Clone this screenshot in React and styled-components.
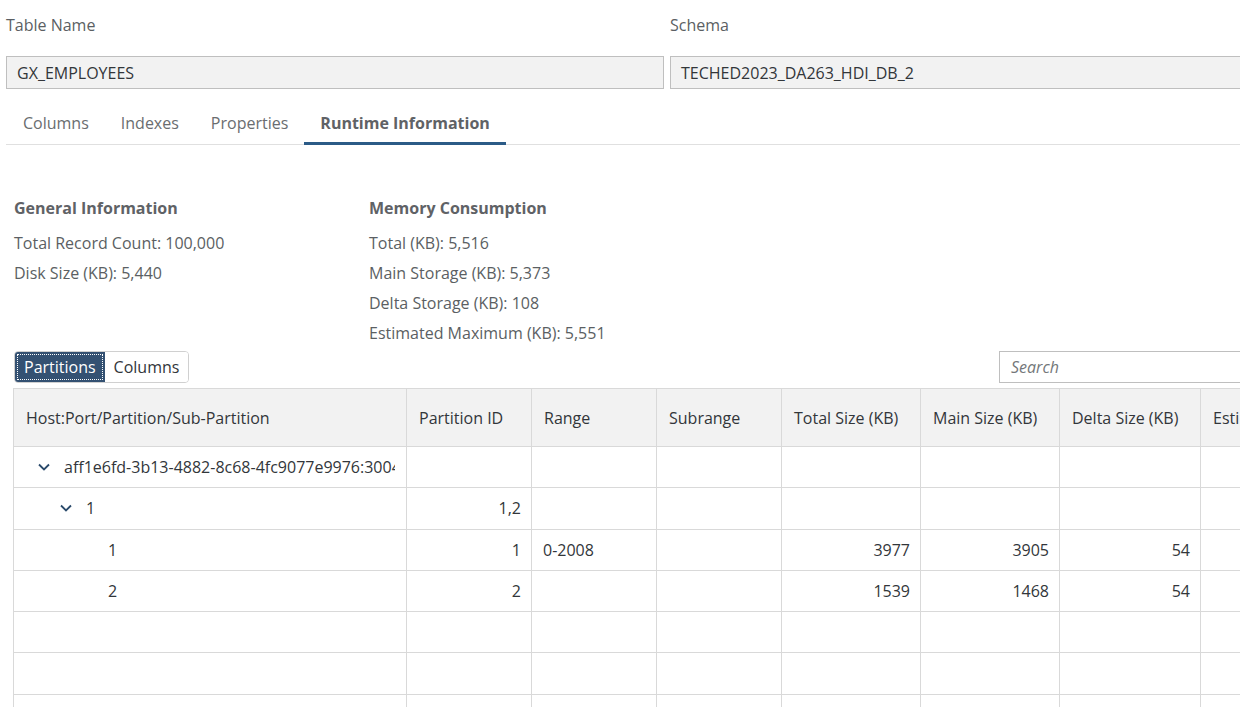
import React from "react";
import styled, { createGlobalStyle } from "styled-components";

const Global = createGlobalStyle`
  html, body { margin: 0; padding: 0; background: #fff; }
  body { width: 1240px; height: 707px; overflow: hidden; font-family: "Open Sans", Roboto, "Liberation Sans", sans-serif; }
  * { box-sizing: border-box; }
`;

const Page = styled.div`
  width: 1340px;
  padding: 0 0 0 6px;
  color: #32363a;
  font-size: 16px;
`;

const FormGrid = styled.div`
  display: grid;
  grid-template-columns: 658px 658px;
  column-gap: 6px;
`;

const Field = styled.div`
  display: flex;
  flex-direction: column;
`;

const Label = styled.div`
  height: 50px;
  margin-bottom: 6px;
  display: flex;
  align-items: center;
  color: #5b5f63;
`;

const ReadInput = styled.div`
  height: 33px;
  background: #f2f2f2;
  border: 1px solid #bfbfbf;
  display: flex;
  align-items: center;
  padding: 0 10px;
  color: #32363a;
`;

const TabBar = styled.div`
  margin-top: 10px;
  padding-left: 2px;
  display: flex;
  border-bottom: 1px solid #e0e0e0;
  width: 1234px;
`;

const Tab = styled.div`
  height: 46px;
  display: flex;
  align-items: center;
  padding: 4px 16px 0;
  margin-right: ${p => (p.$gap ? 0 : 0)}px;
  color: ${p => (p.$active ? "#5f6266" : "#6a6d70")};
  font-weight: ${p => (p.$active ? 700 : 400)};
  border-bottom: 3px solid ${p => (p.$active ? "#2b5b87" : "transparent")};
  margin-bottom: -1px;
  &:first-child { padding-left: 15px; }
`;

const InfoRow = styled.div`
  display: flex;
  padding: 48px 0 0 8px;
`;

const InfoCol = styled.div`
  width: ${p => p.$w}px;
  display: flex;
  flex-direction: column;
`;

const InfoHead = styled.div`
  height: 30px;
  display: flex;
  align-items: center;
  font-weight: 700;
  color: #5f6266;
  margin-bottom: 5px;
`;

const InfoItem = styled.div`
  height: 30px;
  display: flex;
  align-items: center;
  color: #5b5f63;
`;

const Toolbar = styled.div`
  display: flex;
  justify-content: space-between;
  align-items: center;
  padding: 3px 0 0 8px;
  width: 1300px;
`;

const Segmented = styled.div`
  display: flex;
  height: 32px;
  border: 1px solid #d0d0d0;
  border-radius: 4px;
  overflow: hidden;
`;

const SegBtn = styled.div`
  display: flex;
  align-items: center;
  padding: 0 9px;
  background: ${p => (p.$active ? "#345172" : "#fff")};
  color: ${p => (p.$active ? "#fff" : "#32363a")};
  outline: ${p => (p.$active ? "1px dotted #fff" : "none")};
  outline-offset: -3px;
`;

const SearchBox = styled.div`
  width: 306px;
  height: 32px;
  border: 1px solid #bfbfbf;
  display: flex;
  align-items: center;
  padding: 0 11px;
  font-style: italic;
  color: #74777a;
  margin-right: 1px;
`;

const Table = styled.div`
  margin: 5px 0 0 7px;
  display: grid;
  grid-template-columns: 393px 125px 125px 125px 139px 139px 141px 200px;
  border-left: 1px solid #d9d9d9;
  border-top: 1px solid #d9d9d9;
  width: max-content;
`;

const HeadCell = styled.div`
  height: 58px;
  background: #f2f2f2;
  border-right: 1px solid #d9d9d9;
  border-bottom: 1px solid #d9d9d9;
  display: flex;
  align-items: center;
  padding: 0 12px;
  white-space: nowrap;
  overflow: hidden;
  color: #32363a;
`;

const Cell = styled.div`
  height: 41.3px;
  border-right: 1px solid #d9d9d9;
  border-bottom: 1px solid #d9d9d9;
  display: flex;
  align-items: center;
  justify-content: ${p => (p.$right ? "flex-end" : "flex-start")};
  padding: 0 ${p => (p.$right ? 10 : 11)}px 0 ${p => 11 + (p.$indent || 0)}px;
  white-space: nowrap;
  overflow: hidden;
  color: #32363a;
`;

const TreeText = styled.span`
  overflow: hidden;
  white-space: nowrap;
  text-overflow: clip;
`;

const Chevron = styled.svg`
  width: 14px;
  height: 10px;
  flex: none;
  margin-right: 13px;
`;

const ChevronDown = () => (
  <Chevron viewBox="0 0 14 10">
    <path d="M2 2.5 L7 7.5 L12 2.5" fill="none" stroke="#2a4a6b" strokeWidth="1.8" />
  </Chevron>
);

const headers = [
  "Host:Port/Partition/Sub-Partition",
  "Partition ID",
  "Range",
  "Subrange",
  "Total Size (KB)",
  "Main Size (KB)",
  "Delta Size (KB)",
  "Estimated Maximum (KB)",
];

const rows = [
  { level: 0, tree: true, name: "aff1e6fd-3b13-4882-8c68-4fc9077e9976:30040", vals: ["", "", "", "", "", "", ""] },
  { level: 1, tree: true, name: "1", vals: ["1,2", "", "", "", "", "", ""] },
  { level: 2, name: "1", vals: ["1", "0-2008", "", "3977", "3905", "54", ""] },
  { level: 2, name: "2", vals: ["2", "", "", "1539", "1468", "54", ""] },
  { empty: true },
  { empty: true },
  { empty: true },
];

const rightCols = [0, 3, 4, 5, 6];

export default function App() {
  return (
    <>
      <Global />
      <Page>
        <FormGrid>
          <Field>
            <Label>Table Name</Label>
            <ReadInput>GX_EMPLOYEES</ReadInput>
          </Field>
          <Field>
            <Label>Schema</Label>
            <ReadInput>TECHED2023_DA263_HDI_DB_2</ReadInput>
          </Field>
        </FormGrid>
        <TabBar>
          <Tab>Columns</Tab>
          <Tab>Indexes</Tab>
          <Tab>Properties</Tab>
          <Tab $active>Runtime Information</Tab>
        </TabBar>
        <InfoRow>
          <InfoCol $w={355}>
            <InfoHead>General Information</InfoHead>
            <InfoItem>Total Record Count: 100,000</InfoItem>
            <InfoItem>Disk Size (KB): 5,440</InfoItem>
          </InfoCol>
          <InfoCol $w={400}>
            <InfoHead>Memory Consumption</InfoHead>
            <InfoItem>Total (KB): 5,516</InfoItem>
            <InfoItem>Main Storage (KB): 5,373</InfoItem>
            <InfoItem>Delta Storage (KB): 108</InfoItem>
            <InfoItem>Estimated Maximum (KB): 5,551</InfoItem>
          </InfoCol>
        </InfoRow>
        <Toolbar>
          <Segmented>
            <SegBtn $active>Partitions</SegBtn>
            <SegBtn>Columns</SegBtn>
          </Segmented>
          <SearchBox>Search</SearchBox>
        </Toolbar>
        <Table>
          {headers.map(h => (
            <HeadCell key={h}>{h}</HeadCell>
          ))}
          {rows.map((r, i) =>
            r.empty ? (
              headers.map((_, j) => <Cell key={i + "-" + j} />)
            ) : (
              <React.Fragment key={i}>
                <Cell $indent={r.tree ? 12 + r.level * 22 : 83}>
                  {r.tree && <ChevronDown />}
                  <TreeText>{r.name}</TreeText>
                </Cell>
                {r.vals.map((v, j) => (
                  <Cell key={j} $right={rightCols.includes(j)}>{v}</Cell>
                ))}
              </React.Fragment>
            )
          )}
        </Table>
      </Page>
    </>
  );
}
